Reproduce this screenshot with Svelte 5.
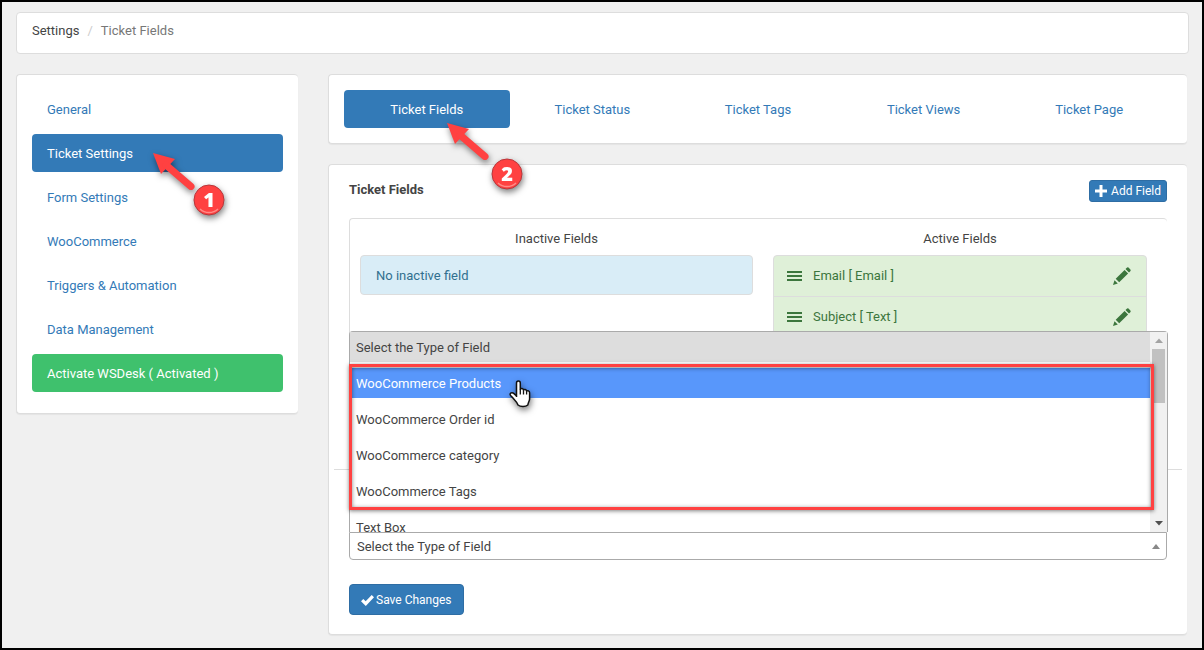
<script lang="ts">
  interface Field {
    label: string;
    type: string;
  }

  const menu = [
    'General',
    'Ticket Settings',
    'Form Settings',
    'WooCommerce',
    'Triggers & Automation',
    'Data Management',
  ];

  const tabs = ['Ticket Fields', 'Ticket Status', 'Ticket Tags', 'Ticket Views', 'Ticket Page'];

  const fieldTypes = [
    'WooCommerce Products',
    'WooCommerce Order id',
    'WooCommerce category',
    'WooCommerce Tags',
    'Text Box',
  ];

  const placeholder = 'Select the Type of Field';

  const activeFields: Field[] = [
    { label: 'Email', type: 'Email' },
    { label: 'Subject', type: 'Text' },
  ];

  let activeMenu = $state('Ticket Settings');
  let activeTab = $state('Ticket Fields');
  let highlighted = $state('WooCommerce Products');
  let selected = $state(placeholder);
</script>

{#snippet callout(num: number, x: number, y: number)}
  <svg class="callout callout-{num}" width="84" height="80" viewBox="-4 -4 84 80" aria-hidden="true">
    <g class="drop">
      <path d="M0 0L22 6L8 21Z" fill="#ff4141" />
      <path d="M13 12L38 33.5" stroke="#ff4141" stroke-width="7" stroke-linecap="round" />
    </g>
    <g class="drop">
      <circle cx={x} cy={y} r="15" fill="#ff4141" stroke="#b8363a" />
      <path d="M{x - 9} {y + 9}a13 13 0 0 0 18 0" fill="none" stroke="#ff8a86" stroke-width="1.5" />
      <text {x} y={y + 7} text-anchor="middle">{num}</text>
    </g>
  </svg>
{/snippet}

<div class="page">
  <nav class="breadcrumb" aria-label="Breadcrumb">
    <span>Settings</span>
    <span class="sep">/</span>
    <span class="current">Ticket Fields</span>
  </nav>

  <div class="layout">
    <aside class="card sidebar">
      {#each menu as item}
        <a
          href="#settings"
          class="pill"
          class:active={item === activeMenu}
          onclick={() => (activeMenu = item)}
        >
          {item}
          {#if item === 'Ticket Settings'}{@render callout(1, 56, 47)}{/if}
        </a>
      {/each}
      <a href="#activate" class="pill activated">Activate WSDesk ( Activated )</a>
    </aside>

    <main>
      <nav class="card tabs">
        {#each tabs as tab}
          <a
            href="#fields"
            class="pill"
            class:active={tab === activeTab}
            onclick={() => (activeTab = tab)}
          >
            {tab}
            {#if tab === 'Ticket Fields'}{@render callout(2, 60, 51)}{/if}
          </a>
        {/each}
      </nav>

      <section class="card content">
        <header>
          <h1>Ticket Fields</h1>
          <button class="btn add">
            <svg width="12" height="12" viewBox="0 0 12 12"><path d="M4.500 0h3v4.500H12v3H7.500V12h-3V7.500H0v-3h4.500z" fill="#fff" /></svg>
            Add Field
          </button>
        </header>

        <div class="fields">
          <div>
            <h2>Inactive Fields</h2>
            <ul class="list inactive">
              <li>No inactive field</li>
            </ul>
          </div>
          <div>
            <h2>Active Fields</h2>
            <ul class="list enabled">
              {#each activeFields as field}
                <li>
                  <svg width="15" height="10" viewBox="0 0 15 10"><path d="M0 0h15v2H0zM0 4h15v2H0zM0 8h15v2H0z" fill="#3c763d" /></svg>
                  <span>{field.label} [ {field.type} ]</span>
                  <button class="edit" aria-label="Edit {field.label}">
                    <svg width="18" height="18" viewBox="0 0 18 18">
                      <path d="M0 18L1.500 13.200L4.800 16.500zM2.700 11.700L11.600 2.900L15.100 6.400L6.200 15.200zM12.500 2L14.100 0.500Q14.800 0 15.500 0.600L17.400 2.500Q18 3.200 17.500 3.900L16 5.500z" fill="#3c763d" />
                    </svg>
                  </button>
                </li>
              {/each}
            </ul>
          </div>
        </div>

        <hr />

        <div class="picker">
          <select aria-label="Field type" bind:value={selected}>
            <option>{placeholder}</option>
            {#each fieldTypes as type}
              <option>{type}</option>
            {/each}
          </select>
          <svg class="caret" width="8" height="5" viewBox="0 0 8 5"><path d="M0 5L4 0L8 5z" fill="#888" /></svg>

          <div class="dropdown">
            <ul role="listbox" aria-label="Field types">
              <li role="option" class="chosen" aria-selected="true">{placeholder}</li>
              {#each fieldTypes as type}
                <li
                  role="option"
                  aria-selected="false"
                  class:highlighted={type === highlighted}
                  onmouseenter={() => (highlighted = type)}
                >{type}</li>
              {/each}
            </ul>
            <div class="scrollbar">
              <svg width="8" height="5" viewBox="0 0 8 5"><path d="M0 5L4 0.500L8 5z" fill="#a3a3a3" /></svg>
              <div class="track"><div class="thumb"></div></div>
              <svg width="8" height="5" viewBox="0 0 8 5"><path d="M0 0L4 4.500L8 0z" fill="#505050" /></svg>
            </div>
            <div class="outline"></div>
            <svg class="pointer" width="22" height="28" viewBox="0 0 22 28" aria-hidden="true">
              <path
                d="M7.500 17V3.200C7.500 0.400 11.300 0.400 11.300 3.200V9.500C11.700 8 14.300 8.300 14.500 10.200C15.100 9 17.400 9.400 17.600 11.200C18.600 10.200 20.600 10.900 20.600 12.800V19C20.600 21 19.300 21.800 18.800 25C16.500 27 11.500 27 9 25C8.300 22 5 19.500 3.500 17.500C2.500 16.200 0.700 15.500 1.100 14C1.600 12.400 3.900 12.600 5 13.600L7.500 16"
                fill="#fff" stroke="#111" stroke-width="1.500" stroke-linejoin="round"
              />
              <path d="M11.300 9.500V14.500M14.500 10.500V14.500M17.600 11.500V14.500" stroke="#111" stroke-width="1.300" />
            </svg>
          </div>
        </div>

        <button class="btn save">
          <svg width="13" height="11" viewBox="0 0 13 11"><path d="M0 6.200L2.300 3.900L4.700 6.300L10.700 0L13 2.300L4.800 11z" fill="#fff" /></svg>
          Save Changes
        </button>
      </section>
    </main>
  </div>
</div>

<style>
  :global(body) {
    margin: 0;
    background: #f0f0f0;
  }

  .page,
  .page :global(*) {
    box-sizing: border-box;
  }

  .page {
    min-height: 100vh;
    padding: 10px 13px 13px 14px;
    border: 2px solid #000;
    font-family: Roboto, 'Open Sans', sans-serif;
    font-size: 13px;
    line-height: 20px;
    color: #444;
  }

  a {
    color: #337ab7;
    text-decoration: none;
  }

  ul {
    list-style: none;
    margin: 0;
    padding: 0;
  }

  button,
  select {
    font: inherit;
    cursor: pointer;
  }

  .breadcrumb {
    display: flex;
    gap: 8px;
    padding: 8px 15px 12px;
    margin-bottom: 20px;
    background: #fff;
    border: 1px solid #ddd;
    border-radius: 4px;
  }

  .sep {
    color: #ccc;
  }

  .current {
    color: #777;
  }

  .layout {
    display: grid;
    grid-template-columns: 282fr 859fr;
    gap: 30px;
    align-items: start;
    margin-right: 2px;
  }

  .card {
    background: #fff;
    border: 1px solid #ddd;
    border-right: 0;
    border-radius: 4px;
    box-shadow: 0 1px 1px rgba(0, 0, 0, 0.05);
  }

  .pill {
    position: relative;
    display: block;
    padding: 10px 15px 8px;
    border-radius: 4px;
  }

  .pill.active {
    background: #337ab7;
    color: #fff;
  }

  .sidebar {
    display: flex;
    flex-direction: column;
    gap: 6px;
    padding: 15px 15px 21px;
  }

  .activated {
    background: #3fc16d;
    color: #fff;
  }

  .tabs {
    display: flex;
    padding: 15px;
    margin-bottom: 20px;
  }

  .tabs .pill {
    flex: 1;
    text-align: center;
  }

  .callout {
    position: absolute;
    z-index: 2;
    overflow: visible;
    pointer-events: none;
  }

  .callout-1 {
    top: 15px;
    left: 117px;
  }

  .callout-2 {
    top: 29px;
    left: 99px;
  }

  .callout text {
    fill: #fff;
    font-family: 'Open Sans', 'Noto Sans', sans-serif;
    font-size: 20px;
    font-weight: 800;
  }

  .drop {
    filter: drop-shadow(1px 3px 3px rgba(0, 0, 0, 0.5));
  }

  .content {
    padding: 15px 20px 19px;
  }

  header {
    display: flex;
    justify-content: space-between;
    align-items: flex-start;
    margin-bottom: 16px;
  }

  h1 {
    margin: 0;
    font-size: 13px;
    line-height: 20px;
  }

  .btn {
    display: inline-flex;
    align-items: center;
    border: 1px solid #2e6da4;
    background: #337ab7;
    color: #fff;
    font-size: 12px;
    line-height: 18px;
  }

  .add {
    gap: 4px;
    padding: 1px 5px;
    border-radius: 3px;
  }

  .save {
    gap: 2px;
    margin-top: 24px;
    padding: 6px 11px 5px;
    border-radius: 4px;
  }

  .fields {
    display: grid;
    grid-template-columns: 393fr 374fr;
    gap: 20px;
    min-height: 231px;
    padding: 10px 20px 10px 10px;
    border: 1px solid #ddd;
    border-right: 0;
    border-radius: 4px;
  }

  h2 {
    margin: 0 0 6px;
    font-size: 13px;
    font-weight: 400;
    line-height: 20px;
    text-align: center;
  }

  .list li {
    display: flex;
    align-items: center;
    padding: 10px 15px 8px;
    border: 1px solid #ddd;
  }

  .list li:first-child {
    border-radius: 4px 4px 0 0;
  }

  .inactive li:only-child {
    border-radius: 4px;
    background: #d9edf7;
    color: #31708f;
  }

  .enabled li {
    gap: 11px;
    height: 42px;
    padding: 10px 15px 10px 13px;
    background: #dff0d8;
    color: #3c763d;
  }

  .enabled li + li {
    margin-top: -1px;
  }

  .edit {
    display: flex;
    margin-left: auto;
    padding: 0;
    border: 0;
    background: none;
  }

  hr {
    margin: 20px -15px 62px;
    border: 0;
    border-top: 1px solid #ddd;
  }

  .picker {
    position: relative;
  }

  select {
    display: block;
    width: 100%;
    height: 28px;
    padding: 2px 7px 0;
    border: 1px solid #aaa;
    border-radius: 0 0 4px 4px;
    appearance: none;
    background: #fff;
    color: #444;
  }

  .caret {
    position: absolute;
    right: 7px;
    top: 12px;
    pointer-events: none;
  }

  .dropdown {
    position: absolute;
    right: -1px;
    bottom: 100%;
    left: 0;
    display: flex;
    height: 201px;
    border: 1px solid #aaa;
    border-bottom: 0;
    border-radius: 4px 4px 0 0;
    background: #fff;
  }

  .dropdown ul {
    flex: 1;
    overflow: hidden;
  }

  .dropdown li {
    margin-bottom: 6px;
    padding: 6px 6px 4px;
    cursor: pointer;
  }

  .dropdown .chosen {
    background: #ddd;
  }

  .dropdown .highlighted {
    background: #5897fb;
    color: #fff;
  }

  .scrollbar {
    display: flex;
    flex-direction: column;
    align-items: center;
    gap: 6px;
    width: 17px;
    padding: 6px 0;
    background: #f1f1f1;
  }

  .track {
    flex: 1;
    width: 13px;
  }

  .thumb {
    height: 54px;
    background: #c1c1c1;
  }

  .outline {
    position: absolute;
    top: 32px;
    right: 13px;
    left: -1px;
    height: 146px;
    border: 3px solid #ff4141;
    box-shadow: 0 1px 4px rgba(0, 0, 0, 0.5), inset 0 1px 4px rgba(0, 0, 0, 0.5);
    pointer-events: none;
  }

  .pointer {
    position: absolute;
    top: 48px;
    left: 159px;
    filter: drop-shadow(1px 3px 3px rgba(0, 0, 0, 0.5));
    pointer-events: none;
  }
</style>
